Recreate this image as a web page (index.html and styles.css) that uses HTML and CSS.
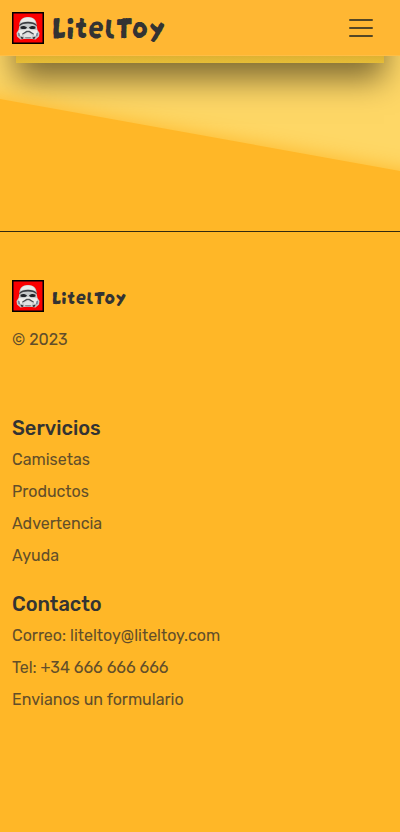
FILE: index.html
```
<!DOCTYPE html>
<html lang="es">
<head>
<meta charset="utf-8">
<meta name="viewport" content="width=device-width, initial-scale=1">
<title>LitelToy</title>
<link rel="stylesheet" href="styles.css">
</head>
<body>
<svg class="defs" aria-hidden="true">
  <symbol id="trooper" viewBox="0 0 32 32">
    <path fill="#000" d="M0 0h32v32H0z"/>
    <path fill="#fb0000" d="M1.500 1.500h29v29h-29z"/>
    <path fill="#c6c9c9" d="M7.300 14C7 8 10.500 5 16 5s9 3 8.700 9l.8 4 2 3-.5 3.500-3.500 3-3.500-.5H12l-3.500.5-3.500-3L4.500 21l2-3z"/>
    <path fill="#ebebe8" d="M8.500 10.500c1-4 4-5 7.500-5s6.500 1 7.500 5c-4-1.500-11-1.500-15 0z"/>
    <path fill="#3a3c40" d="M7.300 13c1.500-2.500 5-3.200 8.700-3.200s7.200.7 8.700 3.200v1.200c-2.200-2-5.200-2.700-8.700-2.700s-6.500.7-8.700 2.700z"/>
    <path fill="#222428" d="M8.500 14.800c2-1.300 4.500-1.200 6.500.7l-1 1.300c-2 .5-4 .2-5.500-.3zM23.500 14.800c-2-1.300-4.500-1.200-6.500.7l1 1.300c2 .5 4 .2 5.500-.3z"/>
    <path fill="#eeeeeb" d="m7 18 5 .3 3-1.300h2l3 1.300 5-.3 1 3.500-3 2.500-5-3h-4l-5 3-3-2.500z"/>
    <path fill="#4b4e52" d="m10 21.800 4.500-3h3l4.500 3-.5.900-4.500-2.400h-2l-4.500 2.400z"/>
    <path fill="#e2e3e1" d="m11.500 23 3.500-2h2l3.500 2-1 2.500h-7z"/>
    <path fill="#8b9092" d="M13 25h6l-.5 1.500h-5z"/>
    <path fill="#5d7891" d="m6 20.500 1.500.7.5 3.300-1.500-.5zM26 20.500l-1.500.7-.5 3.300 1.500-.5z"/>
    <path fill="#303236" d="m8.500 24.500 3 1-.5 1.500-2-.5zM23.500 24.500l-3 1 .5 1.500 2-.5z"/>
  </symbol>
</svg>
<nav class="navbar">
  <a class="brand"><svg class="logo"><use href="#trooper"/></svg><span class="wordmark">LitelToy</span></a>
  <svg class="toggler" viewBox="0 0 30 30"><path stroke="#554725" stroke-linecap="round" stroke-width="2" d="M4 7h22M4 15h22M4 23h22"/></svg>
</nav>
<main class="hero">
  <div class="card"></div>
</main>
<footer class="footer">
  <section class="about">
    <a class="brand"><svg class="logo"><use href="#trooper"/></svg><span class="wordmark small">LitelToy</span></a>
    <p class="copy">© 2023</p>
  </section>
  <section>
    <h5>Servicios</h5>
    <ul>
      <li>Camisetas</li>
      <li>Productos</li>
      <li>Advertencia</li>
      <li>Ayuda</li>
    </ul>
  </section>
  <section>
    <h5>Contacto</h5>
    <ul>
      <li>Correo: liteltoy@liteltoy.com</li>
      <li>Tel: +34 666 666 666</li>
      <li>Envianos un formulario</li>
    </ul>
  </section>
</footer>
</body>
</html>
```
FILE: styles.css
```
* { box-sizing: border-box; }
body {
  margin: 0;
  background: #ffb727;
  color: #333;
  font: 400 16px/24px Rubik, Roboto, sans-serif;
  overflow-x: hidden;
}
.defs { display: block; width: 0; height: 0; }
.navbar {
  position: relative;
  z-index: 2;
  display: flex;
  align-items: center;
  justify-content: space-between;
  height: 56px;
  padding: 0 24px 0 12px;
  background: #ffb733;
  border-bottom: 1px solid #ffbe45;
}
.brand { display: flex; align-items: center; gap: 8px; height: 32px; }
.logo { display: block; width: 32px; height: 32px; }
.wordmark {
  font: 400 32px/32px "Darumadrop One", Lato, sans-serif;
  padding-bottom: 8px;
  white-space: nowrap;
}
.wordmark.small { font-size: 21px; padding: 0 0 2px; }
.toggler { width: 30px; height: 30px; fill: none; }
.hero {
  position: relative;
  height: 175px;
  overflow: hidden;
  background: #fed766;
  display: flow-root;
}
.card {
  height: 207px;
  margin: -200px 16px 0;
  background: linear-gradient(#deb233 200px, #e6bd36);
  box-shadow: 0 16px 30px rgba(0, 0, 0, .5);
}
.hero::after {
  content: "";
  position: absolute;
  left: -100px;
  top: 43px;
  width: 640px;
  height: 400px;
  background: #ffb727;
  box-shadow: 0 0 20px #ffb727;
  transform: rotate(10.2deg);
  transform-origin: 100px 0;
}
.footer { border-top: 1px solid #33290f; padding: 48px 12px 0; }
.about { height: 136px; }
.copy { margin: 16px 0 0; color: #624e2a; }
h5 { margin: 0 0 8px; font-size: 20px; line-height: 24px; font-weight: 500; }
ul { margin: 0 0 24px; padding: 0; list-style: none; color: #624e2a; }
li { margin-bottom: 8px; white-space: nowrap; }
```
